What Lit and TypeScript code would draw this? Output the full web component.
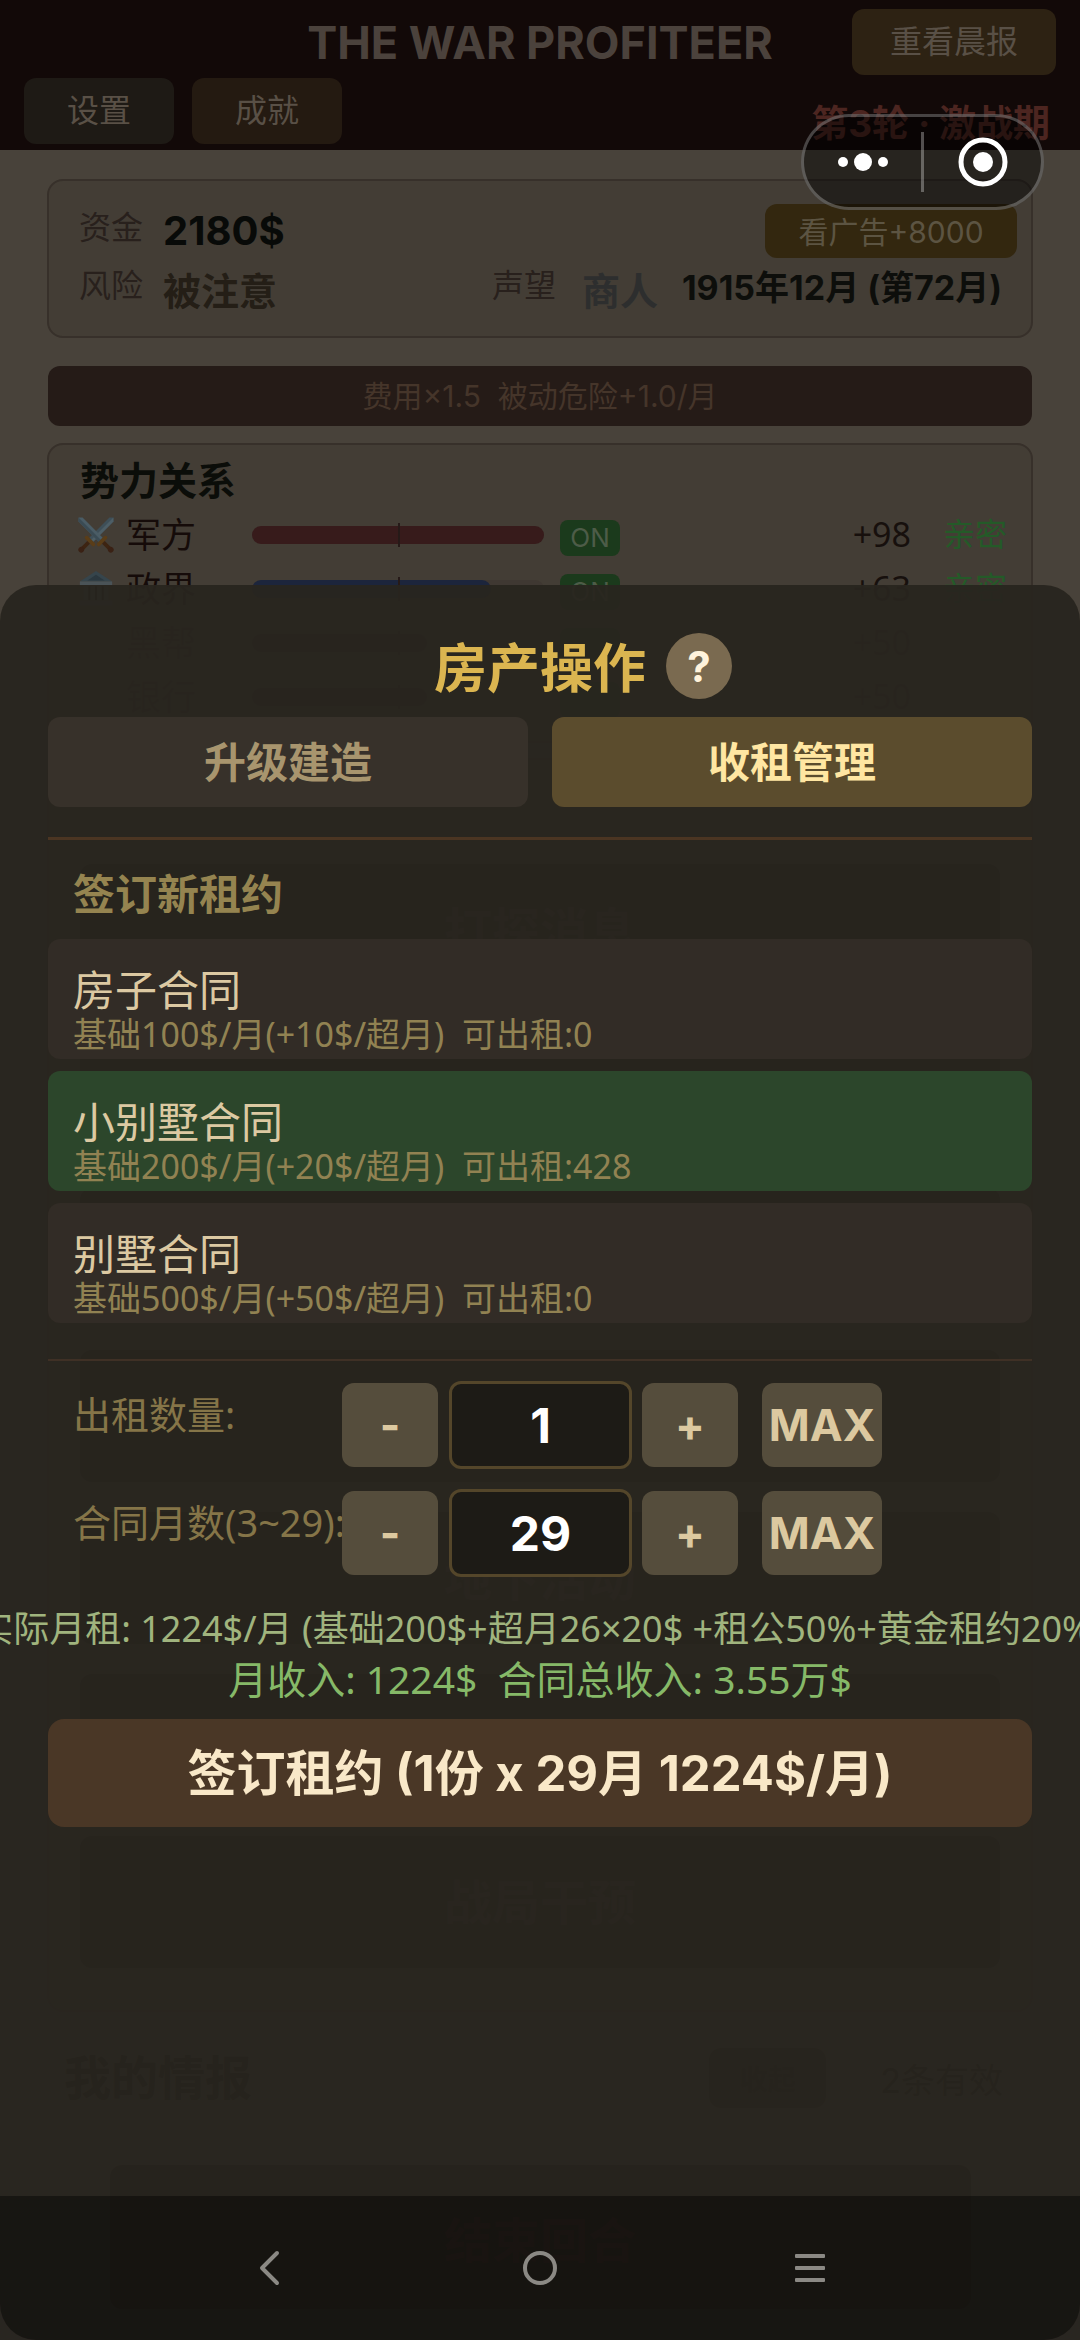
import { LitElement, html, css, svg, nothing } from "lit";
import { customElement, state } from "lit/decorators.js";
import { classMap } from "lit/directives/class-map.js";
import { styleMap } from "lit/directives/style-map.js";

const swords = svg`
  <g transform="rotate(45 20 20)">
    <path d="M17 -3 L20 -6 L23 -3 V27 H17 Z" fill="#3e4f58"/>
    <path d="M20 -6 L23 -3 V27 H20 Z" fill="#4d5e66"/>
    <rect x="13" y="27" width="14" height="4" rx="2" fill="#5a3d18"/>
    <rect x="18" y="31" width="4" height="9" fill="#3d2412"/>
    <circle cx="20" cy="42" r="3" fill="#3a2114"/>
  </g>
  <g transform="rotate(-45 20 20)">
    <path d="M17 -3 L20 -6 L23 -3 V27 H17 Z" fill="#4a5c65"/>
    <path d="M17 -3 L20 -6 V27 H17 Z" fill="#3a4b54"/>
    <rect x="13" y="27" width="14" height="4" rx="2" fill="#5a3d18"/>
    <rect x="18" y="31" width="4" height="9" fill="#3d2412"/>
    <circle cx="20" cy="42" r="3" fill="#3a2114"/>
  </g>`;

const hall = svg`
  <path d="M20 1 L37 12 H3 Z" fill="#36454c"/>
  <path d="M20 5 L29 11 H11 Z" fill="#2b383f"/>
  <rect x="3" y="12" width="34" height="4" fill="#4a5357"/>
  <path d="M7 17h5v15H7zM14 17h5v15h-5zM21 17h5v15h-5zM28 17h5v15h-5z" fill="#465055"/>
  <path d="M12 17h2v15h-2zM19 17h2v15h-2zM26 17h2v15h-2z" fill="#0d0e0f"/>
  <rect x="3" y="32" width="34" height="5" fill="#3c474c"/>`;

const factions = [
  { name: "军方", icon: swords, fill: 100, tone: "red", score: "+98", tie: "亲密", muted: false },
  { name: "政界", icon: hall, fill: 82, tone: "blue", score: "+63", tie: "亲密", muted: false },
  { name: "黑帮", icon: nothing, fill: 60, tone: "dark", score: "+50", tie: "", muted: true },
  { name: "银行", icon: nothing, fill: 60, tone: "dark", score: "+50", tie: "", muted: true },
];

const actions = ["打探消息", "", "", "", "地下活动", "", "战局干预"];

const contracts = [
  { name: "房子合同", note: "基础100$/月(+10$/超月)  可出租:0" },
  { name: "小别墅合同", note: "基础200$/月(+20$/超月)  可出租:428" },
  { name: "别墅合同", note: "基础500$/月(+50$/超月)  可出租:0" },
];

@customElement("game-page")
export class GamePage extends LitElement {
  static styles = css`
    :host { display: block; }
    * { box-sizing: border-box; }
    button { font: inherit; border: 0; padding: 0; margin: 0; }
    .top {
      display: grid;
      grid-template-columns: 1fr auto 1fr;
      grid-template-rows: 66px 66px;
      row-gap: 3px;
      align-items: center;
      padding: 9px 24px 6px;
      background: #120908;
    }
    .title { grid-column: 2; margin: 0; padding-top: 2px; font-size: 45px; line-height: 66px; font-weight: 700; color: #4b423c; white-space: nowrap; }
    .pill { height: 66px; padding-bottom: 6px; border-radius: 12px; font-size: 32px; color: #595046; }
    .news { grid-column: 3; justify-self: end; width: 204px; background: #2d2213; }
    .tools { grid-area: 2 / 1 / 3 / 3; display: flex; gap: 18px; }
    .tools .pill { width: 150px; }
    .settings { background: #1e1a15; }
    .awards { background: #241a11; }
    .stage { grid-area: 2 / 2 / 3 / 4; justify-self: end; align-self: end; padding-right: 6px; font-size: 37px; line-height: 40px; font-weight: 700; white-space: pre; color: #4c2520; }
    .body { padding: 29px 47px 31px; }
    .card { border: 2px solid #37302a; border-radius: 16px; background: #433d35; }
    .status { display: grid; gap: 4px; padding: 23px 14px 20px 30px; }
    .line { display: flex; align-items: center; height: 54px; }
    .key { width: 84px; padding-bottom: 6px; font-size: 32px; line-height: 42px; color: #28201c; }
    .val { padding-bottom: 2px; font-size: 38px; font-weight: 700; color: #241e16; }
    .cash { font-size: 40px; color: #080a08; }
    .ad { margin-left: auto; width: 252px; height: 54px; padding-bottom: 2px; border-radius: 12px; background: #33270f; font-size: 30px; color: #5c5442; }
    .fame { margin-left: auto; width: 90px; }
    .rank { color: #2d2e2e; }
    .date { padding: 0 15px 8px 24px; font-size: 34px; font-weight: 700; color: #0d0e0b; }
    .notice { margin: 28px 1px 17px; border-radius: 12px; background: #251b17; font-size: 30px; line-height: 60px; text-align: center; white-space: pre; color: #45352a; }
    .factions { padding: 10px 24px 18px 28px; }
    .heading { margin: 0; padding-left: 3px; font-size: 39px; line-height: 52px; font-weight: 700; color: #0b0d09; }
    .faction { display: grid; grid-template-columns: 49px 126px 292px 1fr auto 96px; align-items: center; height: 54px; }
    .icon { width: 38px; height: 38px; overflow: visible; }
    .who { padding-bottom: 4px; font-size: 35px; color: #150b09; }
    .track { position: relative; height: 18px; border-radius: 9px; background: #3f3832; }
    .fill { height: 18px; border-radius: 9px; }
    .red { background: #371b1b; }
    .blue { background: #1c253c; }
    .dark { background: #2a221c; }
    .track::after { content: ""; position: absolute; left: 50%; top: -3px; width: 2px; height: 24px; background: #261a18; }
    .on { justify-self: start; margin: 6px 0 0 16px; width: 60px; height: 36px; border-radius: 8px; background: #1b3a1c; font-size: 26px; line-height: 36px; text-align: center; color: #4d5c48; }
    .score { padding-bottom: 2px; font-family: "Noto Sans", sans-serif; font-size: 34px; color: #17100d; }
    .tie { justify-self: end; padding-bottom: 6px; font-size: 32px; color: #245a28; }
    .muted .who, .muted .score { color: #2a241e; }
    .actions { display: grid; gap: 30px; margin-top: 15px; padding: 104px 31px 42px; }
    .action { width: 100%; height: 132px; padding-bottom: 6px; border-radius: 12px; background: #17130f; font-size: 48px; font-weight: 700; color: #3a332c; }
    .intel { display: flex; align-items: center; margin-top: 14px; padding: 12px 28px 12px 15px; border-color: transparent; background: none; color: #000; }
    .intel-title { margin: 0 auto 0 0; font-size: 47px; line-height: 76px; }
    .toggle { width: 117px; height: 60px; border-radius: 12px; background: #221c17; font-size: 28px; font-weight: 700; color: #000; }
    .count { padding-left: 54px; font-size: 34px; color: #000; }
    .end { display: block; width: calc(100% - 125px); height: 144px; margin: 35px auto 0; border-radius: 12px; background: #120d08; font-size: 48px; font-weight: 700; color: #7a1c16; }
  `;

  render() {
    return html`
      <header class="top">
        <h1 class="title">THE WAR PROFITEER</h1>
        <button class="pill news">重看晨报</button>
        <div class="tools">
          <button class="pill settings">设置</button>
          <button class="pill awards">成就</button>
        </div>
        <div class="stage">第3轮 · 激战期</div>
      </header>
      <main class="body">
        <section class="card status">
          <div class="line">
            <span class="key">资金</span><span class="val cash">2180$</span>
            <button class="ad">看广告+8000</button>
          </div>
          <div class="line">
            <span class="key">风险</span><span class="val">被注意</span>
            <span class="key fame">声望</span><span class="val rank">商人</span>
            <span class="date">1915年12月 (第72月)</span>
          </div>
        </section>
        <div class="notice">费用×1.5  被动危险+1.0/月</div>
        <section class="card factions">
          <h2 class="heading">势力关系</h2>
          ${factions.map(
            (f) => html`
              <div class=${classMap({ faction: true, muted: f.muted })}>
                <svg class="icon" viewBox="0 0 40 40" aria-hidden="true">${f.icon}</svg>
                <span class="who">${f.name}</span>
                <div class="track">
                  <div class=${"fill " + f.tone} style=${styleMap({ width: f.fill + "%" })}></div>
                </div>
                <span class="on">${f.muted ? nothing : "ON"}</span>
                <span class="score">${f.score}</span>
                <span class="tie">${f.tie}</span>
              </div>
            `,
          )}
        </section>
        <section class="card actions">
          ${actions.map((a) =>
            a ? html`<button class="action">${a}</button>` : html`<div class="action"></div>`,
          )}
        </section>
        <section class="card intel">
          <h2 class="intel-title">我的情报</h2>
          <button class="toggle">收起</button>
          <span class="count">2条有效</span>
        </section>
        <button class="end">结束回合</button>
      </main>
    `;
  }
}

@customElement("lease-sheet")
export class LeaseSheet extends LitElement {
  @state() private selected = 1;
  @state() private amount = 1;
  @state() private months = 29;

  static styles = css`
    :host { display: block; overflow: hidden; min-height: 75vh; border-radius: 36px; background: rgba(40, 37, 31, 0.95); }
    * { box-sizing: border-box; }
    button, input { font: inherit; border: 0; padding: 0; margin: 0; }
    .inner { padding: 48px 48px 180px; }
    .head { display: grid; grid-template-columns: 1fr auto 1fr; gap: 20px; align-items: center; height: 66px; }
    .title { grid-column: 2; margin: 0; padding-top: 6px; font-size: 53px; line-height: 60px; font-weight: 700; color: #dbb550; }
    .help { width: 66px; height: 66px; border-radius: 50%; background: #7a6a50; font-size: 42px; font-weight: 700; color: #fff3dc; }
    .tabs { display: grid; grid-template-columns: 1fr 1fr; gap: 24px; margin-top: 18px; }
    .tab { height: 90px; padding-bottom: 6px; border-radius: 12px; background: #37312a; font-size: 42px; font-weight: 700; color: #a8956e; }
    .tab.active { background: #5b4c2d; color: #ffe6a2; }
    .rule { height: 3px; margin: 30px 0 25px; border: 0; background: #4b3522; }
    .thin { height: 2px; margin: 36px 0 22px; background: #3f3025; }
    .subtitle { margin: 0 0 14px; padding-left: 25px; font-size: 42px; line-height: 60px; font-weight: 700; color: #958450; }
    .list { display: grid; gap: 12px; }
    .contract { display: grid; align-content: start; height: 120px; padding: 28px 25px 8px; border-radius: 12px; background: #322c26; text-align: left; white-space: pre; }
    .contract.active { background: #2c462b; }
    .name { font-size: 42px; line-height: 48px; color: #dcc9a2; }
    .note, .label, .sum { font-family: "Noto Sans", "Noto Sans CJK SC", sans-serif; }
    .note { font-size: 34px; line-height: 38px; color: #918252; }
    .form { display: grid; gap: 24px; }
    .field { display: grid; grid-template-columns: 269px 107px 193px 120px 120px; grid-template-rows: 84px; align-items: center; padding-left: 25px; }
    .label { padding-bottom: 22px; font-size: 38px; line-height: 48px; white-space: nowrap; color: #857548; }
    .step { position: relative; height: 84px; border-radius: 12px; background: #554d3c; font-size: 44px; font-weight: 700; color: #dcc9a0; }
    .minus, .plus { width: 96px; }
    .num { width: 183px; height: 88px; border: 3px solid #54462a; border-radius: 12px; background: #1d1b16; font-size: 48px; font-weight: 700; text-align: center; color: #fff; }
    .sums { padding: 29px 0 15px; }
    .sum { display: flex; justify-content: center; font-size: 36px; line-height: 50px; white-space: pre; color: #a0b47e; }
    .total { font-size: 39px; color: #86b968; }
    .submit { width: 100%; height: 108px; padding-bottom: 8px; border-radius: 16px; background: #4a3726; font-size: 49px; font-weight: 700; color: #f9e8c8; }
  `;

  private field(id: string, label: string, value: number, min: number, max: number, set: (n: number) => void) {
    const put = (n: number) => set(Math.min(max, Math.max(min, n || min)));
    return html`
      <div class="field">
        <label class="label" for=${id}>${label}</label>
        <button class="step minus" @click=${() => put(value - 1)}>-</button>
        <input class="num" id=${id} inputmode="numeric" .value=${String(value)}
          @change=${(e: Event) => put(Number((e.target as HTMLInputElement).value))} />
        <button class="step plus" @click=${() => put(value + 1)}>+</button>
        <button class="step" @click=${() => put(max)}>MAX</button>
      </div>
    `;
  }

  render() {
    return html`
      <div class="inner">
        <header class="head">
          <h2 class="title">房产操作</h2>
          <button class="help">?</button>
        </header>
        <nav class="tabs">
          <button class="tab">升级建造</button>
          <button class="tab active">收租管理</button>
        </nav>
        <hr class="rule" />
        <h3 class="subtitle">签订新租约</h3>
        <div class="list">
          ${contracts.map(
            (c, i) => html`<button
              class=${classMap({ contract: true, active: i === this.selected })}
              @click=${() => (this.selected = i)}
            ><span class="name">${c.name}</span><span class="note">${c.note}</span></button>`,
          )}
        </div>
        <hr class="rule thin" />
        <div class="form">
          ${this.field("amount", "出租数量:", this.amount, 1, 428, (n) => (this.amount = n))}
          ${this.field("months", "合同月数(3~29):", this.months, 3, 29, (n) => (this.months = n))}
        </div>
        <div class="sums">
          <div class="sum"><span>实际月租: 1224$/月 (基础200$+超月26×20$ +租公50%+黄金租约20%)</span></div>
          <div class="sum total"><span>月收入: 1224$  合同总收入: 3.55万$</span></div>
        </div>
        <button class="submit">签订租约 (${this.amount}份 x ${this.months}月 1224$/月)</button>
      </div>
    `;
  }
}

@customElement("app-root")
export class AppRoot extends LitElement {
  static styles = css`
    :host {
      display: grid;
      position: relative;
      min-height: 100vh;
      overflow: hidden;
      background: #48423a;
      font-family: Inter, "Noto Sans CJK SC", sans-serif;
    }
    .page, .overlay { grid-area: 1 / 1; min-width: 0; }
    .overlay { position: relative; display: grid; align-items: end; }
    .capsule {
      position: absolute;
      top: 114px;
      right: 36px;
      display: grid;
      grid-template-columns: 1fr 3px 1fr;
      align-items: center;
      box-sizing: border-box;
      width: 243px;
      height: 96px;
      border: 3px solid rgba(255, 255, 255, 0.25);
      border-radius: 48px;
      background: rgba(0, 0, 0, 0.45);
    }
    .split { height: 60px; background: rgba(255, 255, 255, 0.3); }
    .cap, .key { display: grid; place-items: center; border: 0; padding: 0; background: none; }
    .system {
      position: absolute;
      left: 0;
      right: 0;
      bottom: 0;
      display: grid;
      grid-template-columns: repeat(3, 25%);
      justify-content: center;
      height: 144px;
      background: rgba(0, 0, 0, 0.42);
    }
  `;

  render() {
    return html`
      <game-page class="page"></game-page>
      <div class="overlay">
        <lease-sheet></lease-sheet>
      </div>
      <div class="capsule">
        <button class="cap" aria-label="更多">
          <svg width="52" height="20" viewBox="0 0 52 20" fill="#fff">
            <circle cx="6" cy="10" r="5" /><circle cx="26" cy="10" r="9" /><circle cx="46" cy="10" r="5" />
          </svg>
        </button>
        <span class="split"></span>
        <button class="cap" aria-label="关闭">
          <svg width="52" height="52" viewBox="0 0 52 52">
            <circle cx="26" cy="26" r="22" fill="none" stroke="#fff" stroke-width="5" />
            <circle cx="26" cy="26" r="10" fill="#fff" />
          </svg>
        </button>
      </div>
      <nav class="system">
        <button class="key" aria-label="返回">
          <svg width="40" height="40" viewBox="0 0 40 40" fill="none" stroke="#8b8984" stroke-width="4" stroke-linecap="round" stroke-linejoin="round">
            <path d="M27 5 L12 20 L27 35" />
          </svg>
        </button>
        <button class="key" aria-label="主页">
          <svg width="40" height="40" viewBox="0 0 40 40" fill="none" stroke="#8b8984" stroke-width="4">
            <circle cx="20" cy="20" r="15" />
          </svg>
        </button>
        <button class="key" aria-label="菜单">
          <svg width="40" height="40" viewBox="0 0 40 40" fill="#8b8984">
            <rect x="5" y="6" width="30" height="4" rx="1" /><rect x="5" y="18" width="30" height="4" rx="1" /><rect x="5" y="30" width="30" height="4" rx="1" />
          </svg>
        </button>
      </nav>
    `;
  }
}
